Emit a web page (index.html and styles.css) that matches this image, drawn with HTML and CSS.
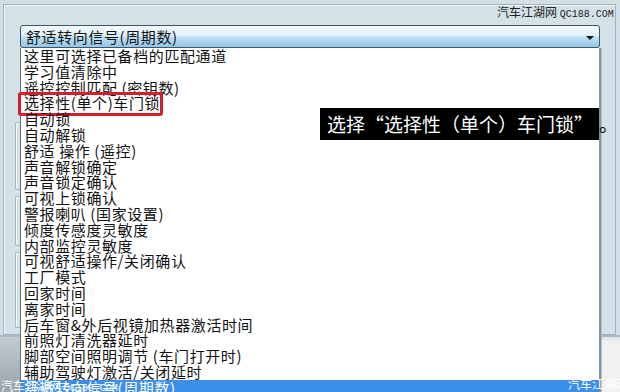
FILE: index.html
```html
<!DOCTYPE html>
<html lang="zh-CN">
<head>
<meta charset="utf-8">
<link rel="stylesheet" href="styles.css">
</head>
<body>
<div class="screen">
  <div class="dialog">
    <div class="combo">
      <span class="combo-text">舒适转向信号(周期数)</span>
      <span class="arrow"></span>
    </div>
    <div class="groups">
      <div class="group g1"></div>
      <div class="group g2"></div>
      <div class="group g3"></div>
    </div>
  </div>
  <div class="floor">
    <div class="floor-left"></div>
    <div class="floor-right"></div>
  </div>

  <ul class="dropdown">
    <li>这里可选择已备档的匹配通道</li>
    <li>学习值清除中</li>
    <li>遥控控制匹配 (密钥数)</li>
    <li class="marked">选择性(单个)车门锁</li>
    <li>自动锁</li>
    <li>自动解锁</li>
    <li>舒适 操作 (遥控)</li>
    <li>声音解锁确定</li>
    <li>声音锁定确认</li>
    <li>可视上锁确认</li>
    <li>警报喇叭 (国家设置)</li>
    <li>倾度传感度灵敏度</li>
    <li>内部监控灵敏度</li>
    <li>可视舒适操作/关闭确认</li>
    <li>工厂模式</li>
    <li>回家时间</li>
    <li>离家时间</li>
    <li>后车窗&amp;外后视镜加热器激活时间</li>
    <li>前照灯清洗器延时</li>
    <li>脚部空间照明调节 (车门打开时)</li>
    <li>辅助驾驶灯激活/关闭延时</li>
    <li class="selected">舒适转向信号(周期数)</li>
  </ul>

  <div class="mark mark-top">汽车江湖网 <span class="mono">QC188.COM</span></div>
  <div class="mark mark-bl">汽车江湖网 <span class="mono">QC188.COM</span></div>
  <div class="mark mark-br">汽车江湖网 <span class="mono">QC188.COM</span></div>

  <div class="callout"><span class="callout-box">选择“选择性（单个）车门锁”</span><span class="callout-end">。</span></div>
</div>
</body>
</html>
```

FILE: styles.css
```css
html, body {
  margin: 0;
  padding: 0;
  width: 620px;
  height: 392px;
  overflow: hidden;
}

body {
  background: #d3dfe6;
  font-family: "Noto Sans CJK SC", "Liberation Sans", sans-serif;
}

.screen {
  position: relative;
  width: 620px;
  height: 392px;
  overflow: hidden;
  background: #d3dfe6;
  display: flex;
  flex-direction: column;
}

.dialog {
  box-sizing: border-box;
  margin: 4px 4px 0 3px;
  height: 331px;
  flex: none;
  border: 1px solid #9fb2be;
  background: #d4e1e8;
  box-shadow: inset 1px 1px 0 #f2f7fa;
  padding: 20px 15px 0 16px;
  display: flex;
  flex-direction: column;
}

.floor {
  flex: 1;
  display: flex;
  border-top: 2px solid #a9bac6;
}

.floor-left {
  width: 20px;
  background: linear-gradient(#c2cad1, #9aa4ad);
}

.floor-right {
  flex: 1;
  background: linear-gradient(#dfe3e6, #f1f1f1 6px);
}

.combo {
  box-sizing: border-box;
  height: 23px;
  border: 1px solid #3f5566;
  border-radius: 3px;
  background: linear-gradient(#f3f9fd 0%, #e0f0fa 45%, #bcdff4 55%, #92c6e8 100%);
  display: flex;
  align-items: center;
  justify-content: space-between;
  padding: 0 5px 0 5px;
}

.combo-text {
  font-size: 15px;
  letter-spacing: 0.6px;
  color: #141414;
  line-height: 21px;
}

.arrow {
  width: 0;
  height: 0;
  border-left: 4px solid transparent;
  border-right: 4px solid transparent;
  border-top: 4px solid #111;
  margin-top: 2px;
}

.groups {
  display: flex;
  flex-direction: column;
  gap: 6px;
  margin: 74px 0 0 -5px;
}

.group {
  border: 1px solid #a7b7c1;
  border-right: none;
  box-shadow: inset 1px 1px 0 #f7fafc;
  border-radius: 2px 0 0 2px;
}

.g1 { height: 66px; }
.g2 { height: 48px; }
.g3 { height: 74px; }

.dropdown {
  position: absolute;
  left: 20px;
  top: 48px;
  width: 581px;
  height: 360px;
  box-sizing: border-box;
  margin: 0;
  padding: 0;
  list-style: none;
  background: #ffffff;
  border-left: 1px solid #5d7180;
  border-right: 2px solid #84939e;
  box-shadow: 1px 0 0 #b3c0c8;
}

.dropdown li {
  position: relative;
  padding-left: 3px;
  font-size: 15px;
  letter-spacing: 0.6px;
  line-height: 15.8px;
  height: 15.8px;
  color: #111;
  white-space: nowrap;
}

.dropdown li.selected {
  background: #3b8fe8;
  color: #fff;
}

.dropdown li.marked::after {
  content: "";
  position: absolute;
  left: -3px;
  top: -3.5px;
  width: 145px;
  height: 24px;
  box-sizing: border-box;
  border: 3px solid #d31e2b;
  border-radius: 3px;
}

.mark {
  position: absolute;
  white-space: nowrap;
  font-size: 12px;
  line-height: 14px;
  color: #222;
}

.mark .mono {
  font-family: "Liberation Mono", monospace;
  font-size: 10px;
}

.mark-top {
  left: 497px;
  top: 5px;
}

.mark-bl {
  left: 1px;
  top: 379px;
  color: #fff;
}

.mark-br {
  left: 568px;
  top: 377px;
  color: #fff;
}

.callout {
  position: absolute;
  left: 320px;
  top: 108px;
  white-space: nowrap;
  font-size: 19px;
  line-height: 32px;
  font-feature-settings: "fwid";
  display: flex;
}

.callout-box {
  background: #000;
  color: #fff;
  padding: 0 6px 0 7px;
}

.callout-end {
  color: #000;
}
```
